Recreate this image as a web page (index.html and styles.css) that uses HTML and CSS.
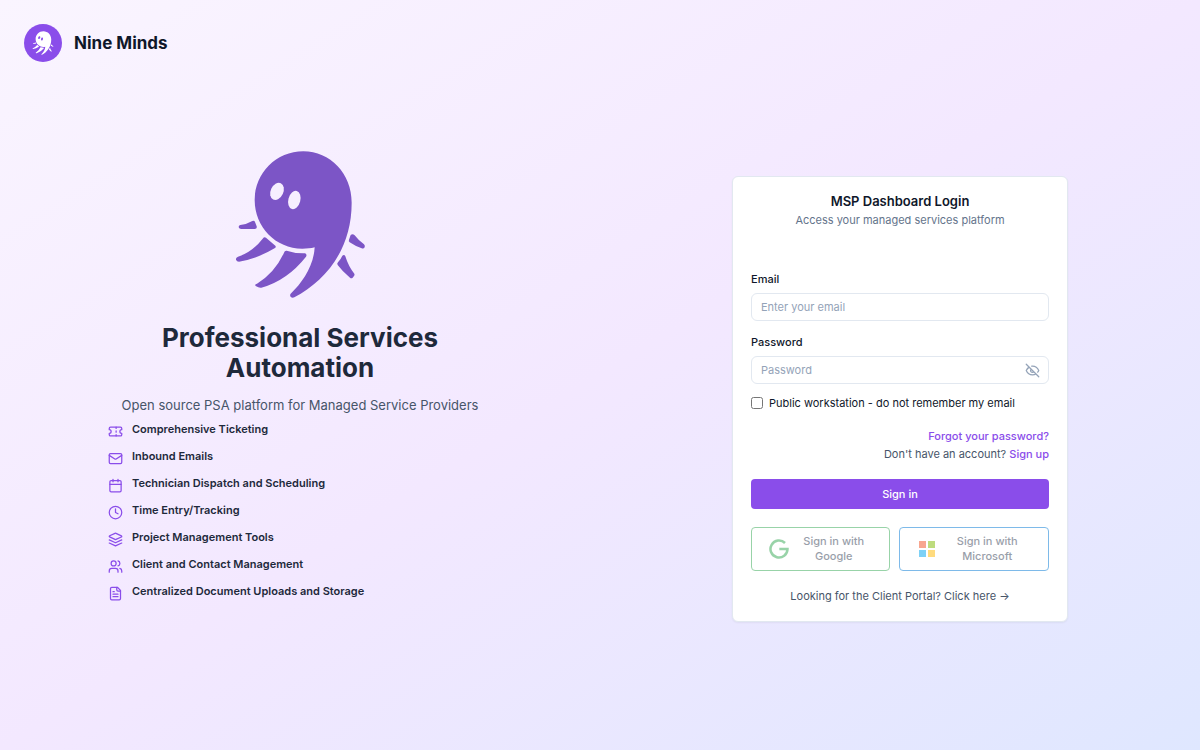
FILE: index.html
```html
<!DOCTYPE html>
<html lang="en">

<head>
    <meta charset="UTF-8">
    <meta name="viewport" content="width=device-width, initial-scale=1.0">
    <title>MSP Dashboard Login</title>
    <link rel="stylesheet" href="styles.css">
</head>

<body>
    <svg class="defs" aria-hidden="true">
        <symbol id="octopus" viewBox="48 27 393 447">
            <path d="M398 185C398 97 333 31 253 31C172 31 107 96 107 177C107 258 170 323 250 323C264 323 276 322 287 319C284 375 250 425 215 458C210 465 217 473 226 469C315 422 398 330 398 185Z" />
            <path d="M64 252Q85 249 100 240Q106 237 108 243L113 256Q115 264 107 264H66Q58 263 59 257Q60 253 64 252Z" />
            <path d="M141 290L169 314Q172 318 168 321Q115 353 60 362Q53 362 51 356Q50 349 57 347Q100 333 131 293Q136 286 141 290Z" />
            <path d="M203 329Q230 338 258 337Q265 340 261 347Q205 418 127 440Q121 442 110 435Q106 430 114 428Q168 395 195 335Q197 328 203 329Z" />
            <path d="M370 344Q376 339 379 346Q389 378 406 398Q408 402 405 405L401 410Q397 413 393 410Q370 391 356 372Q353 368 357 364Q365 355 370 344Z" />
            <path d="M395 282Q401 277 407 283Q420 300 435 310Q439 314 437 319Q434 324 428 322Q408 315 392 304Q388 301 390 296Z" />
            <g class="eyes">
                <ellipse cx="174" cy="151" rx="19" ry="27" transform="rotate(25 174 151)" />
                <ellipse cx="226" cy="177" rx="18" ry="28" transform="rotate(15 226 177)" />
            </g>
        </symbol>
    </svg>

    <header class="header">
        <span class="logo"><svg><use href="#octopus" /></svg></span>
        <span class="brand">Nine Minds</span>
    </header>

    <main class="main">
        <section class="intro">
            <div class="intro-inner">
                <svg class="mascot"><use href="#octopus" /></svg>
                <h1>Professional Services Automation</h1>
                <p class="tagline">Open source PSA platform for Managed Service Providers</p>
                <ul class="features">
                    <li>
                        <svg class="icon" viewBox="0 0 24 24"><path d="M2 9a3 3 0 0 1 0 6v2a2 2 0 0 0 2 2h16a2 2 0 0 0 2-2v-2a3 3 0 0 1 0-6V7a2 2 0 0 0-2-2H4a2 2 0 0 0-2 2Z" /><path d="M13 5v2M13 17v2M13 11v2" /></svg>
                        <span>Comprehensive Ticketing</span>
                    </li>
                    <li>
                        <svg class="icon" viewBox="0 0 24 24"><rect x="2" y="4" width="20" height="16" rx="2" /><path d="m22 7-8.97 5.7a1.94 1.94 0 0 1-2.06 0L2 7" /></svg>
                        <span>Inbound Emails</span>
                    </li>
                    <li>
                        <svg class="icon" viewBox="0 0 24 24"><path d="M8 2v4M16 2v4M3 10h18" /><rect x="3" y="4" width="18" height="18" rx="2" /></svg>
                        <span>Technician Dispatch and Scheduling</span>
                    </li>
                    <li>
                        <svg class="icon" viewBox="0 0 24 24"><circle cx="12" cy="12" r="10" /><path d="M12 6v6l4 2" /></svg>
                        <span>Time Entry/Tracking</span>
                    </li>
                    <li>
                        <svg class="icon" viewBox="0 0 24 24"><path d="m12.83 2.18a2 2 0 0 0-1.66 0L2.6 6.08a1 1 0 0 0 0 1.83l8.58 3.91a2 2 0 0 0 1.66 0l8.58-3.9a1 1 0 0 0 0-1.83Z" /><path d="m22 17.65-9.17 4.16a2 2 0 0 1-1.66 0L2 17.65" /><path d="m22 12.65-9.17 4.16a2 2 0 0 1-1.66 0L2 12.65" /></svg>
                        <span>Project Management Tools</span>
                    </li>
                    <li>
                        <svg class="icon" viewBox="0 0 24 24"><path d="M16 21v-2a4 4 0 0 0-4-4H6a4 4 0 0 0-4 4v2" /><circle cx="9" cy="7" r="4" /><path d="M22 21v-2a4 4 0 0 0-3-3.87M16 3.13a4 4 0 0 1 0 7.75" /></svg>
                        <span>Client and Contact Management</span>
                    </li>
                    <li>
                        <svg class="icon" viewBox="0 0 24 24"><path d="M15 2H6a2 2 0 0 0-2 2v16a2 2 0 0 0 2 2h12a2 2 0 0 0 2-2V7Z" /><path d="M14 2v4a2 2 0 0 0 2 2h4M10 9H8M16 13H8M16 17H8" /></svg>
                        <span>Centralized Document Uploads and Storage</span>
                    </li>
                </ul>
            </div>
        </section>

        <section class="login">
            <form class="card">
                <h2>MSP Dashboard Login</h2>
                <p class="subtitle">Access your managed services platform</p>

                <div class="field">
                    <label for="email">Email</label>
                    <input type="email" id="email" placeholder="Enter your email">
                </div>

                <div class="field">
                    <label for="password">Password</label>
                    <div class="password">
                        <input type="password" id="password" placeholder="Password">
                        <button type="button" class="toggle" aria-label="Show password">
                            <svg class="icon" viewBox="0 0 24 24"><path d="M9.88 9.88a3 3 0 1 0 4.24 4.24M10.73 5.08A10.43 10.43 0 0 1 12 5c7 0 10 7 10 7a13.16 13.16 0 0 1-1.67 2.68M6.61 6.61A13.53 13.53 0 0 0 2 12s3 7 10 7a9.74 9.74 0 0 0 5.39-1.61M2 2l20 20" /></svg>
                        </button>
                    </div>
                </div>

                <div class="remember">
                    <input type="checkbox" id="public">
                    <label for="public">Public workstation - do not remember my email</label>
                </div>

                <div class="links">
                    <a href="#">Forgot your password?</a>
                    <p>Don't have an account? <a href="#">Sign up</a></p>
                </div>

                <button type="submit" class="submit">Sign in</button>

                <div class="providers">
                    <button type="button" class="provider google" disabled>
                        <svg viewBox="0 0 24 24"><path d="M19.2 4.8A10.2 10.2 0 1 0 22.2 12H12.4" /></svg>
                        <span>Sign in with Google</span>
                    </button>
                    <button type="button" class="provider microsoft" disabled>
                        <svg viewBox="0 0 20 20">
                            <rect x="2" y="2" width="7" height="7" fill="#f25022" />
                            <rect x="11" y="2" width="7" height="7" fill="#7fba00" />
                            <rect x="2" y="11" width="7" height="7" fill="#00a4ef" />
                            <rect x="11" y="11" width="7" height="7" fill="#ffb900" />
                        </svg>
                        <span>Sign in with Microsoft</span>
                    </button>
                </div>

                <a href="#" class="portal">Looking for the Client Portal? Click here →</a>
            </form>
        </section>
    </main>
</body>

</html>
```
FILE: styles.css
```css
* {
    box-sizing: border-box;
    margin: 0;
    padding: 0;
}

body {
    display: flex;
    flex-direction: column;
    min-height: 100vh;
    font-family: Inter, "Liberation Sans", sans-serif;
    font-size: 11px;
    line-height: 18px;
    color: #0f172a;
    background: linear-gradient(to bottom right, #faf5ff, #f3e8ff, #dfe7ff);
}

button,
input {
    font: inherit;
}

a {
    color: #8a4dea;
    font-weight: 500;
    text-decoration: none;
}

.defs {
    display: none;
}

.header {
    display: flex;
    align-items: center;
    gap: 12px;
    padding: 24px 24px 0;
}

.logo {
    display: flex;
    align-items: center;
    justify-content: center;
    width: 38px;
    height: 38px;
    border-radius: 50%;
    background: #8a4dea;
}

.logo svg {
    width: 22px;
    height: 24px;
    fill: #fff;
    --eyes: #8a4dea;
}

.eyes {
    fill: var(--eyes);
}

.brand {
    font-size: 17px;
    font-weight: 700;
    line-height: 24px;
}

.main {
    display: grid;
    grid-template-columns: 1fr 1fr;
    flex: 1;
    padding-bottom: 62px;
}

.intro,
.login {
    display: flex;
    align-items: center;
    justify-content: center;
}

.intro-inner {
    width: 100%;
    max-width: 384px;
    text-align: center;
}

.mascot {
    display: block;
    width: 131px;
    height: 149px;
    margin: 0 auto 24px;
    fill: #7c55c6;
    --eyes: #f6eeff;
}

h1 {
    margin-bottom: 12px;
    font-size: 26px;
    font-weight: 700;
    line-height: 30px;
    color: #1e293b;
}

.tagline {
    margin-bottom: 4px;
    font-size: 13px;
    line-height: 21px;
    color: #475569;
}

.features {
    display: grid;
    gap: 8px;
    list-style: none;
    text-align: left;
}

.features li {
    display: flex;
    gap: 9px;
    font-weight: 600;
    color: #1e293b;
}

.icon {
    width: 15px;
    height: 15px;
    fill: none;
    stroke: currentColor;
    stroke-width: 2;
    stroke-linecap: round;
    stroke-linejoin: round;
}

.features .icon {
    margin-top: 4px;
    color: #8a4dea;
}

.login {
    padding-top: 48px;
}

.card {
    width: 100%;
    max-width: 336px;
    padding: 14px 18px 16px;
    border: 1px solid #e2e8f0;
    border-radius: 6px;
    background: #fff;
    box-shadow: 0 1px 2px rgba(0, 0, 0, 0.05);
}

h2 {
    font-size: 13px;
    font-weight: 600;
    line-height: 20px;
    text-align: center;
}

.subtitle {
    margin-bottom: 41px;
    text-align: center;
    color: #64748b;
}

.field {
    display: flex;
    flex-direction: column;
    gap: 5px;
    margin-bottom: 12px;
}

.field label {
    font-weight: 500;
}

.field input {
    width: 100%;
    height: 28px;
    padding: 0 9px;
    border: 1px solid #e2e8f0;
    border-radius: 6px;
    background: #fff;
    outline: none;
}

.field input::placeholder {
    color: #94a3b8;
}

.password {
    position: relative;
}

.toggle {
    position: absolute;
    top: 0;
    right: 9px;
    display: flex;
    align-items: center;
    height: 28px;
    border: none;
    background: none;
    color: #94a3b8;
}

.remember {
    display: flex;
    align-items: center;
    gap: 6px;
    margin: -2px 0 15px;
}

.remember input {
    width: 12px;
    height: 12px;
}

.links {
    margin-bottom: 16px;
    text-align: right;
    color: #475569;
}

.links > a {
    display: block;
}

.submit {
    display: block;
    width: 100%;
    height: 30px;
    margin-bottom: 18px;
    border: none;
    border-radius: 4px;
    background: #8a4dea;
    color: #fff;
    font-weight: 500;
}

.providers {
    display: flex;
    gap: 9px;
    margin-bottom: 16px;
}

.provider {
    display: flex;
    flex: 1 1 auto;
    align-items: center;
    gap: 6px;
    min-width: 0;
    padding: 6px 17px;
    border: 1px solid;
    border-radius: 4px;
    background: #fff;
    font-weight: 500;
    line-height: 15px;
    opacity: 0.5;
}

.provider span {
    flex: 1;
    color: #334155;
}

.provider svg {
    flex: none;
    width: 20px;
    height: 20px;
}

.google {
    border-color: #34a853;
}

.google path {
    fill: none;
    stroke: #34a853;
    stroke-width: 3;
}

.microsoft {
    border-color: #0078d4;
}

.portal {
    display: block;
    font-weight: 400;
    text-align: center;
    color: #475569;
}
```
